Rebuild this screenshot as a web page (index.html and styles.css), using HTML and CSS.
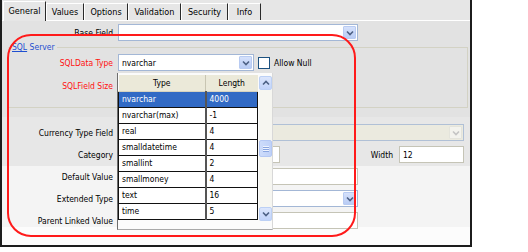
FILE: index.html
```html
<!DOCTYPE html>
<html>
<head>
<meta charset="utf-8">
<link rel="stylesheet" href="styles.css">
</head>
<body>
<div class="frame">
  <div class="tabs">
    <div class="tab active t1">General</div>
    <div class="tab t2">Values</div>
    <div class="tab t3">Options</div>
    <div class="tab t4">Validation</div>
    <div class="tab t5">Security</div>
    <div class="tab t6">Info</div>
  </div>
  <div class="panel">
    <div class="top">
      <div class="row">
        <span class="lbl">Base Field</span>
        <div class="select w240"><span class="val"></span><span class="btn"><svg viewBox="0 0 8 6" width="8" height="6"><path d="M1 1.5 L4 4.5 L7 1.5" fill="none" stroke="#4d6185" stroke-width="1.6"/></svg></span></div>
      </div>
      <fieldset class="group">
        <legend><u>SQL</u> Server</legend>
        <div class="row">
          <span class="lbl lbl-in req">SQLData Type</span>
          <div class="select w136"><span class="val">nvarchar</span><span class="btn"><svg viewBox="0 0 8 6" width="8" height="6"><path d="M1 1.5 L4 4.5 L7 1.5" fill="none" stroke="#4d6185" stroke-width="1.6"/></svg></span></div>
          <span class="chk"></span>
          <span class="chk-lbl">Allow Null</span>
        </div>
        <div class="row row-size">
          <span class="lbl lbl-in req">SQLField Size</span>
        </div>
      </fieldset>
    </div>
    <div class="mid">
      <div class="row">
        <span class="lbl">Currency Type Field</span>
        <div class="select disabled w346"><span class="val"></span><span class="btn"><svg viewBox="0 0 8 6" width="8" height="6"><path d="M1 1.5 L4 4.5 L7 1.5" fill="none" stroke="#c4c4c4" stroke-width="1.6"/></svg></span></div>
      </div>
      <div class="row">
        <span class="lbl">Category</span>
        <div class="input w162"></div>
        <span class="width-lbl">Width</span>
        <div class="input w65"><span class="val">12</span></div>
      </div>
    </div>
    <div class="low">
      <div class="row">
        <span class="lbl">Default Value</span>
        <div class="input w240"></div>
      </div>
      <div class="row">
        <span class="lbl">Extended Type</span>
        <div class="select w240"><span class="val"></span><span class="btn"><svg viewBox="0 0 8 6" width="8" height="6"><path d="M1 1.5 L4 4.5 L7 1.5" fill="none" stroke="#4d6185" stroke-width="1.6"/></svg></span></div>
      </div>
      <div class="row">
        <span class="lbl">Parent Linked Value</span>
        <div class="input w240"></div>
      </div>
    </div>
  </div>

  <div class="dropdown">
    <table class="list">
      <thead>
        <tr><th class="c-type">Type</th><th class="c-len">Length</th></tr>
      </thead>
      <tbody>
        <tr class="sel"><td>nvarchar</td><td>4000</td></tr>
        <tr><td>nvarchar(max)</td><td>-1</td></tr>
        <tr><td>real</td><td>4</td></tr>
        <tr><td>smalldatetime</td><td>4</td></tr>
        <tr><td>smallint</td><td>2</td></tr>
        <tr><td>smallmoney</td><td>4</td></tr>
        <tr><td>text</td><td>16</td></tr>
        <tr><td>time</td><td>5</td></tr>
      </tbody>
    </table>
    <div class="scroll">
      <span class="sbtn"><svg viewBox="0 0 8 6" width="8" height="6"><path d="M1 4.5 L4 1.5 L7 4.5" fill="none" stroke="#4d6185" stroke-width="1.6"/></svg></span>
      <span class="track1"></span>
      <span class="thumb"><i></i><i></i><i></i></span>
      <span class="track2"></span>
      <span class="sbtn"><svg viewBox="0 0 8 6" width="8" height="6"><path d="M1 1.5 L4 4.5 L7 1.5" fill="none" stroke="#4d6185" stroke-width="1.6"/></svg></span>
    </div>
  </div>

  <div class="highlight"></div>
</div>
</body>
</html>
```

FILE: styles.css
```css
* { box-sizing: border-box; }

body {
  margin: 0;
  background: #fff;
  font-family: "DejaVu Sans", sans-serif;
  font-stretch: condensed;
  font-size: 8.5px;
  color: #000;
}

.frame {
  position: relative;
  width: 472px;
  height: 247px;
  border: 2px solid #1c1c1c;
  border-top: 0;
  background: #fcfcfc;
  display: flex;
  flex-direction: column;
}

/* tabs */
.tabs {
  height: 21px;
  flex: none;
  display: flex;
  align-items: flex-end;
  padding-left: 1px;
  background: #e6e6e6;
  border-bottom: 1px solid #fff;
}
.tab {
  height: 17px;
  display: flex;
  align-items: center;
  justify-content: center;
  border-left: 1px solid #fff;
  border-top: 1px solid #fff;
  border-right: 1px solid #2a2a2a;
  background: #e6e6e6;
  font-size: 9px;
}
.tab.active {
  height: 20px;
  margin-bottom: -1px;
  padding-bottom: 2px;
}
.t1 { width: 43px; }
.t2 { width: 38px; }
.t3 { width: 44px; }
.t4 { width: 53px; }
.t5 { width: 47px; }
.t6 { width: 33px; }

/* panel */
.panel {
  flex: 1;
  display: flex;
  flex-direction: column;
}
.top {
  height: 96px;
  background: #e2e2e2;
  padding-top: 3px;
}
.mid {
  height: 49px;
  background: #e7e7e7;
  padding-top: 7px;
  display: flex;
  flex-direction: column;
  gap: 5px;
}
.low {
  height: 61px;
  background: #f4f4f4;
  padding-top: 2px;
  display: flex;
  flex-direction: column;
  gap: 5px;
}

.row {
  display: flex;
  align-items: center;
  height: 17px;
}
.lbl {
  width: 111px;
  flex: none;
  text-align: right;
  margin-right: 5px;
  white-space: nowrap;
}
.lbl-in { width: 104px; }
.req { color: #ff1010; }

.group {
  margin: 0 2px 0 6px;
  padding: 0 0 13px 0;
  border: 1px solid #d3d2c4;
  border-left-color: #e2e2e2;
  border-bottom-color: #d3d2c4;
  min-width: 0;
}
.group legend {
  margin-left: 2px;
  padding: 0 2px 0 1px;
  line-height: 13px;
  color: #1f4fd0;
}
.group legend u { text-decoration: underline; }
.group .row { margin-top: 0; }
.row-size { margin-top: 6px !important; }

/* controls */
.select, .input {
  height: 17px;
  flex: none;
  background: #fff;
  display: flex;
  align-items: center;
  position: relative;
}
.select {
  border: 1px solid #a3b7d6;
}
.input {
  border: 1px solid #c5c4b6;
}
.val {
  flex: 1;
  padding-left: 3px;
  white-space: nowrap;
}
.btn {
  width: 13px;
  height: 13px;
  margin-right: 1px;
  border: 1px solid #b8cbf2;
  border-radius: 1px;
  background: linear-gradient(#d5e1fb, #b9ccf5);
  display: flex;
  align-items: center;
  justify-content: center;
}
.disabled {
  background: #ebeadf;
  border-color: #b0c0d6;
}
.disabled .btn {
  background: #f3f3ee;
  border-color: #e4e4dc;
}
.w240 { width: 240px; }
.w136 { width: 136px; }
.w346 { width: 346px; }
.w162 { width: 162px; }
.w65 { width: 65px; }

.chk {
  width: 12px;
  height: 12px;
  margin-left: 4px;
  border: 1px solid #1c5180;
  background: #fff;
}
.chk-lbl { margin-left: 4px; }

.width-lbl {
  margin-left: auto;
  margin-right: 6px;
}
.mid .row .w65 { margin-right: 6px; }

/* dropdown list overlay */
.dropdown {
  position: absolute;
  left: 115px;
  top: 73px;
  width: 156px;
  height: 157px;
  background: #fbfbfb;
  border-left: 1px solid #6e6e6e;
  border-right: 1px solid #d8d8d8;
  border-bottom: 1px solid #a8a8a8;
  display: flex;
  align-items: flex-start;
  padding-top: 2px;
}
.list {
  border-collapse: collapse;
  width: 139px;
  font-size: 8.5px;
  table-layout: fixed;
}
.list th {
  height: 16px;
  background: #ebe9d9;
  font-weight: normal;
  text-align: center;
  padding: 0;
  border-bottom: 1px solid #d6d3c0;
}
.c-type { width: 87px; border-right: 1px solid #c8c5b2; }
.c-len { width: 52px; }
.list td {
  height: 16px;
  padding: 0 0 0 3px;
  background: #fff;
  border: 1px solid #111;
  border-top: 0;
  white-space: nowrap;
}
.list td:first-child { border-right: 2px solid #555; }
.list tr.sel td {
  background: #316ac5;
  color: #fff;
}
.scroll {
  width: 14px;
  height: 145px;
  margin-left: 1px;
  margin-top: 1px;
  background: #f6f6f1;
  display: flex;
  flex-direction: column;
}
.sbtn {
  height: 14px;
  flex: none;
  border: 1px solid #bcd0f5;
  border-radius: 2px;
  background: linear-gradient(#dce6fc, #c1d3fa);
  display: flex;
  align-items: center;
  justify-content: center;
}
.track1 { height: 50px; flex: none; }
.track2 { flex: 1; }
.thumb {
  height: 17px;
  flex: none;
  border: 1px solid #b4c8f4;
  border-radius: 2px;
  background: linear-gradient(90deg, #cddcfb, #bfd1f8);
  display: flex;
  flex-direction: column;
  align-items: center;
  justify-content: center;
  gap: 1px;
}
.thumb i {
  display: block;
  width: 6px;
  height: 1px;
  background: #eef3fe;
  box-shadow: 0 1px 0 #8aa6e0;
}

/* red annotation */
.highlight {
  position: absolute;
  left: 5px;
  top: 34px;
  width: 349px;
  height: 203px;
  border: 2px solid #ff1a1a;
  border-radius: 24px;
  pointer-events: none;
}
```
